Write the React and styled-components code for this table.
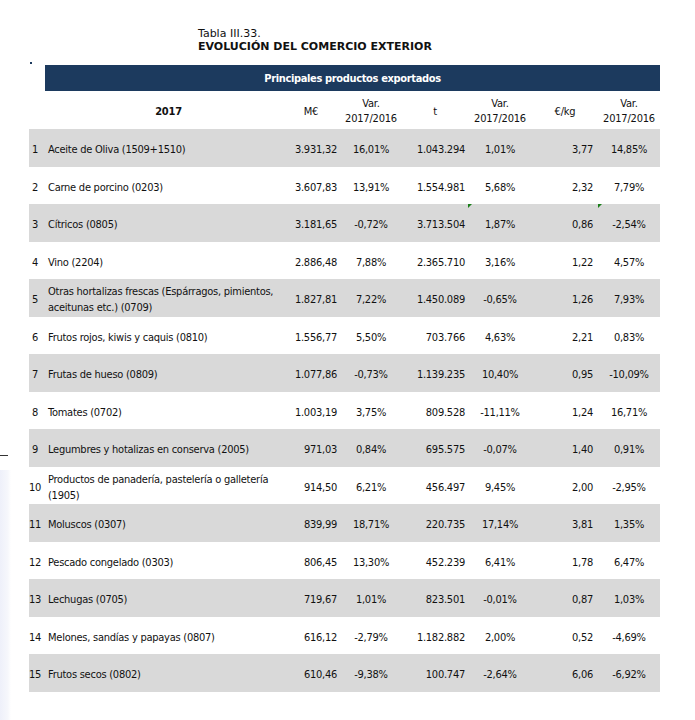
import React from "react";
import styled, { createGlobalStyle } from "styled-components";

const Global = createGlobalStyle`
  html, body { margin: 0; padding: 0; background: #ffffff; }
  body { font-family: "DejaVu Sans Condensed", "DejaVu Sans", sans-serif; color: #111; }
`;

const Page = styled.div`
  position: relative;
  width: 695px;
  height: 720px;
  overflow: hidden;
  padding-top: 27px;
  box-sizing: border-box;
`;

const EdgeShade = styled.div`
  position: absolute;
  left: 0;
  top: 470px;
  width: 11px;
  height: 250px;
  background: linear-gradient(to right, #eef0fa, #f6f7fc 70%, #ffffff);
`;

const EdgeLine = styled.div`
  position: absolute;
  left: 0;
  top: 455px;
  width: 8px;
  height: 1px;
  background: #333;
`;

const Dot = styled.div`
  position: absolute;
  left: 30px;
  top: 62px;
  width: 2px;
  height: 2px;
  background: #1c3a5e;
`;

const Caption = styled.div`
  margin-left: 198px;
  font-family: "DejaVu Sans", Verdana, sans-serif;
  font-size: 11px;
  line-height: 13px;
  color: #111;
`;

const CaptionTitle = styled.div`
  font-weight: bold;
  font-size: 11px;
`;

const Table = styled.div`
  margin-top: 12px;
  margin-left: 29px;
  width: 631px;
`;

const Banner = styled.div`
  margin-left: 16px;
  height: 26px;
  background: #1c3a5e;
  color: #fff;
  font-weight: bold;
  font-size: 11px;
  display: flex;
  align-items: center;
  justify-content: center;
  letter-spacing: -0.35px;
`;

const cols = "19px 234px 58px 62px 66px 64px 66px 62px";

const HeadRow = styled.div`
  display: grid;
  grid-template-columns: ${cols};
  height: 38px;
  font-size: 11px;
  line-height: 15px;
  letter-spacing: -0.2px;
`;

const HeadCell = styled.div`
  display: flex;
  flex-direction: column;
  align-items: center;
  justify-content: center;
  text-align: center;
  padding-top: 2px;
  grid-column: ${(p) => p.$span || "auto"};
  padding-left: ${(p) => p.$pl || 0}px;
  font-weight: ${(p) => (p.$bold ? "bold" : "normal")};
`;

const Row = styled.div`
  display: grid;
  grid-template-columns: ${cols};
  height: ${(p) => (p.$gray ? 38 : 37)}px;
  background: ${(p) => (p.$gray ? "#d9d9d9" : "#ffffff")};
  font-size: 11px;
  line-height: 16px;
  letter-spacing: -0.25px;
  align-items: center;
`;

const Num = styled.div`
  padding-top: 4px;
  padding-left: ${(p) => (p.$wide ? 0 : 3)}px;
`;

const Label = styled.div`
  padding-top: 4px;
  white-space: pre;
`;

const Value = styled.div`
  position: relative;
  align-self: stretch;
  display: flex;
  align-items: center;
  padding-top: 4px;
  justify-content: ${(p) => (p.$center ? "center" : "flex-end")};
  padding-right: ${(p) => (p.$center ? 0 : p.$pr || 3)}px;
`;

const Flag = styled.span`
  position: absolute;
  left: 0;
  top: 0;
  width: 0;
  height: 0;
  border-top: 4px solid #1a7f1a;
  border-right: 4px solid transparent;
`;

const rows = [
  ["1", "Aceite de Oliva (1509+1510)", "3.931,32", "16,01%", "1.043.294", "1,01%", "3,77", "14,85%"],
  ["2", "Carne de porcino (0203)", "3.607,83", "13,91%", "1.554.981", "5,68%", "2,32", "7,79%"],
  ["3", "Cítricos (0805)", "3.181,65", "-0,72%", "3.713.504", "1,87%", "0,86", "-2,54%", true],
  ["4", "Vino (2204)", "2.886,48", "7,88%", "2.365.710", "3,16%", "1,22", "4,57%"],
  ["5", "Otras hortalizas frescas (Espárragos, pimientos,\naceitunas etc.) (0709)", "1.827,81", "7,22%", "1.450.089", "-0,65%", "1,26", "7,93%"],
  ["6", "Frutos rojos, kiwis y caquis (0810)", "1.556,77", "5,50%", "703.766", "4,63%", "2,21", "0,83%"],
  ["7", "Frutas de hueso (0809)", "1.077,86", "-0,73%", "1.139.235", "10,40%", "0,95", "-10,09%"],
  ["8", "Tomates (0702)", "1.003,19", "3,75%", "809.528", "-11,11%", "1,24", "16,71%"],
  ["9", "Legumbres y hotalizas en conserva (2005)", "971,03", "0,84%", "695.575", "-0,07%", "1,40", "0,91%"],
  ["10", "Productos de panadería, pastelería o galletería\n(1905)", "914,50", "6,21%", "456.497", "9,45%", "2,00", "-2,95%"],
  ["11", "Moluscos (0307)", "839,99", "18,71%", "220.735", "17,14%", "3,81", "1,35%"],
  ["12", "Pescado congelado (0303)", "806,45", "13,30%", "452.239", "6,41%", "1,78", "6,47%"],
  ["13", "Lechugas (0705)", "719,67", "1,01%", "823.501", "-0,01%", "0,87", "1,03%"],
  ["14", "Melones, sandías y papayas (0807)", "616,12", "-2,79%", "1.182.882", "2,00%", "0,52", "-4,69%"],
  ["15", "Frutos secos (0802)", "610,46", "-9,38%", "100.747", "-2,64%", "6,06", "-6,92%"],
];

export default function App() {
  return (
    <Page>
      <Global />
      <EdgeShade />
      <EdgeLine />
      <Dot />
      <Caption>
        <div>Tabla III.33.</div>
        <CaptionTitle>EVOLUCIÓN DEL COMERCIO EXTERIOR</CaptionTitle>
      </Caption>
      <Table>
        <Banner>Principales productos exportados</Banner>
        <HeadRow>
          <HeadCell $span="1 / 3" $pl={26} $bold>2017</HeadCell>
          <HeadCell>M€</HeadCell>
          <HeadCell><span>Var.</span><span>2017/2016</span></HeadCell>
          <HeadCell>t</HeadCell>
          <HeadCell><span>Var.</span><span>2017/2016</span></HeadCell>
          <HeadCell>€/kg</HeadCell>
          <HeadCell><span>Var.</span><span>2017/2016</span></HeadCell>
        </HeadRow>
        {rows.map((r, i) => (
          <Row key={r[0]} $gray={i % 2 === 0}>
            <Num $wide={r[0].length > 1}>{r[0]}</Num>
            <Label>{r[1]}</Label>
            <Value>{r[2]}</Value>
            <Value $center>{r[3]}</Value>
            <Value>{r[4]}</Value>
            <Value $center>{r[8] && <Flag />}{r[5]}</Value>
            <Value $pr={5}>{r[6]}</Value>
            <Value $center>{r[8] && <Flag />}{r[7]}</Value>
          </Row>
        ))}
      </Table>
    </Page>
  );
}
